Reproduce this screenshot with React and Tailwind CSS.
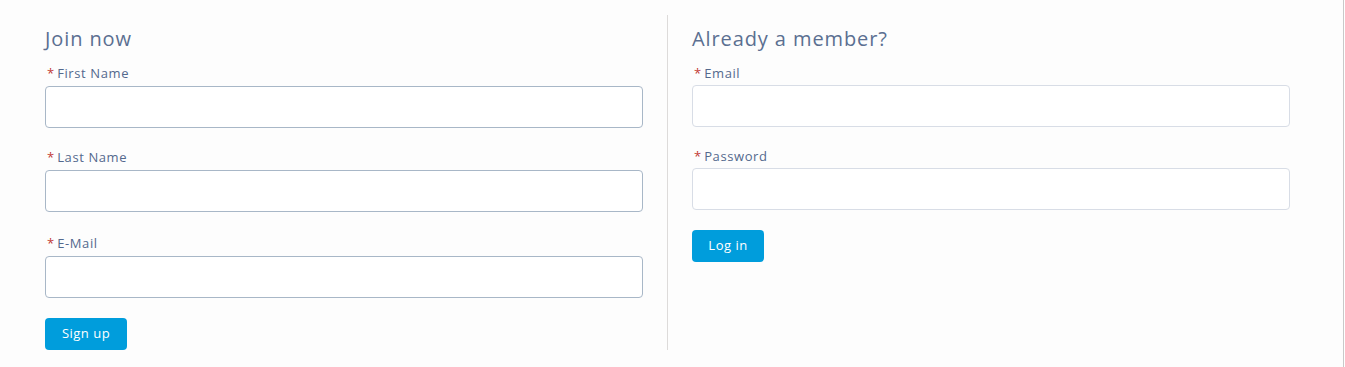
import React from 'react';

const font = { fontFamily: '"Open Sans", "Noto Sans", sans-serif' };

function Field({ label, variant, className = '' }) {
  const join = variant === 'join';
  return (
    <div className={className}>
      <label className="flex items-center h-[16px] leading-[16px] text-[13px] tracking-[0.6px] text-[#54698d] pl-[2px]">
        <span className="text-[#c23934] mr-[3px] tracking-normal">*</span>
        {label}
      </label>
      <input
        className={`block w-full h-[42px] rounded-[4px] border bg-white outline-none ${
          join ? 'mt-[5px] border-[#a8b7c7]' : 'mt-[4px] border-[#d8dde6]'
        }`}
      />
    </div>
  );
}

export default function App() {
  return (
    <div className="w-[1344px] h-[367px] bg-[#fdfdfd] border-r border-[#c9c9c9]" style={font}>
      <div className="flex pl-[45px] pt-[15px]">
        {/* Join */}
        <div className="w-[598px] pt-[11px]">
          <h2 className="text-[20px] leading-[26px] tracking-[0.9px] text-[#5b6f91]">Join now</h2>
          <Field label="First Name" variant="join" className="mt-[13px]" />
          <Field label="Last Name" variant="join" className="mt-[21px]" />
          <Field label="E-Mail" variant="join" className="mt-[23px]" />
          <button className="mt-[20px] w-[82px] h-[32px] rounded-[4px] bg-[#009ddc] text-white text-[13px] tracking-[0.5px]">
            Sign up
          </button>
        </div>

        <div className="mx-[24px] w-px h-[335px] bg-[#dddbda]" />

        {/* Login */}
        <div className="w-[598px] pt-[11px]">
          <h2 className="text-[20px] leading-[26px] tracking-[0.9px] text-[#5b6f91]">Already a member?</h2>
          <Field label="Email" variant="login" className="mt-[13px]" />
          <Field label="Password" variant="login" className="mt-[21px]" />
          <button className="mt-[20px] w-[72px] h-[32px] rounded-[4px] bg-[#009ddc] text-white text-[13px] tracking-[0.5px]">
            Log in
          </button>
        </div>
      </div>
    </div>
  );
}
